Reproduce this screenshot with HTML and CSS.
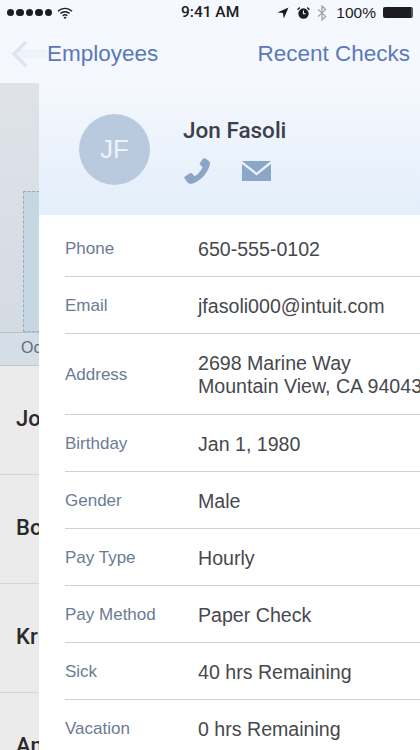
FILE: index.html
```html
<!DOCTYPE html>
<html lang="en">
<head>
    <meta charset="UTF-8">
    <meta name="viewport" content="width=device-width, initial-scale=1.0">
    <title>Jon Fasoli</title>
    <link rel="stylesheet" href="styles.css">
</head>
<body>
    <div class="screen">
        <div class="top">
            <div class="status">
                <div class="status-left">
                    <span class="dots"><i></i><i></i><i></i><i></i><i></i></span>
                    <svg class="wifi" width="16" height="12" viewBox="0 0 16 12">
                        <path d="M1 4.200a10 10 0 0 1 14 0M3.400 6.600a6.600 6.600 0 0 1 9.200 0M5.700 8.800a3.300 3.300 0 0 1 4.600 0" fill="none" stroke="#1c1c22" stroke-width="1.400"/>
                        <path d="M8 12l-1.500-1.600a2.100 2.100 0 0 1 3 0z" fill="#1c1c22"/>
                    </svg>
                </div>
                <div class="time">9:41 AM</div>
                <div class="status-right">
                    <svg width="12" height="12" viewBox="0 0 12 12"><path d="M11.500 .5L.5 5.400l5.400.7.900 5.400z" fill="#1c1c22"/></svg>
                    <svg class="alarm" width="13" height="14" viewBox="0 0 14 14">
                        <circle cx="7" cy="7.600" r="5.600" fill="#1c1c22"/>
                        <path d="M7 4.400v3.400h2.400" fill="none" stroke="#f4f7fd" stroke-width="1.100"/>
                        <path d="M.6 3.400L3 1M13.400 3.400L11 1" stroke="#1c1c22" stroke-width="1.500"/>
                    </svg>
                    <svg class="bt" width="10" height="16" viewBox="0 0 10 16"><path d="M1 4.400l7.600 7L5 15V1l3.600 3.600L1 11.600" fill="none" stroke="#9a9ca3" stroke-width="1.200"/></svg>
                    <span class="pct">100%</span>
                    <span class="battery"></span>
                </div>
            </div>
            <div class="nav">
                <div class="nav-back">
                    <svg width="36" height="30" viewBox="0 0 36 30"><path d="M6 15h30" stroke="#eef2f9" stroke-width="9"/><path d="M15 3L3 15l12 12" fill="none" stroke="#dfe4ee" stroke-width="3.400"/></svg>
                    <span>Employees</span>
                </div>
                <span>Recent Checks</span>
            </div>
        </div>
        <div class="stage">
            <div class="behind">
                <div class="chart"><div class="bar"></div></div>
                <div class="month">Oct</div>
                <div class="person">Jon</div>
                <div class="person">Bob</div>
                <div class="person">Kris</div>
                <div class="person">Ann</div>
            </div>
            <div class="panel">
                <div class="head">
                    <div class="avatar">JF</div>
                    <div class="who">
                        <div class="name">Jon Fasoli</div>
                        <div class="actions">
                            <svg width="29" height="29" viewBox="0 0 29 29"><path d="M21 1.600l4.600 3.200c1.400 1 1.700 2.400 1.200 4.200-1.200 4.400-3.600 8.600-7 12-3.200 3.200-6.600 5.400-10.200 6.400-2.200.6-4 .4-5.200-1.200l-2.800-3.800c-.5-.8-.3-1.700.5-2.200l4.800-3c.8-.5 1.600-.4 2.200.3l1.700 2c.4.5 1 .6 1.600.3 3-1.900 5.300-4.500 6.900-7.700.3-.6.2-1.200-.3-1.600l-1.700-1.500c-.7-.6-.8-1.400-.4-2.100l2.900-4c.4-.7 1.300-.8 2.200-.3z" fill="#8ba6c6"/></svg>
                            <svg width="29" height="20" viewBox="0 0 29 20"><path d="M0 0h29L14.500 11.500z" fill="#8ba6c6"/><path d="M0 3v17h29V3L14.500 14.500z" fill="#8ba6c6"/></svg>
                        </div>
                    </div>
                </div>
                <div class="rows">
                    <div class="row first"><div class="label">Phone</div><div class="value">650-555-0102</div></div>
                    <div class="row"><div class="label">Email</div><div class="value">jfasoli000@intuit.com</div></div>
                    <div class="row tall"><div class="label">Address</div><div class="value">2698 Marine Way<br>Mountain View, CA 94043</div></div>
                    <div class="row"><div class="label">Birthday</div><div class="value">Jan 1, 1980</div></div>
                    <div class="row"><div class="label">Gender</div><div class="value">Male</div></div>
                    <div class="row"><div class="label">Pay Type</div><div class="value">Hourly</div></div>
                    <div class="row"><div class="label">Pay Method</div><div class="value">Paper Check</div></div>
                    <div class="row"><div class="label">Sick</div><div class="value">40 hrs Remaining</div></div>
                    <div class="row"><div class="label">Vacation</div><div class="value">0 hrs Remaining</div></div>
                </div>
            </div>
        </div>
    </div>
</body>
</html>
```

FILE: styles.css
```css
html, body {
    margin: 0;
    padding: 0;
}

body {
    font-family: "Liberation Sans", Arial, sans-serif;
    background: #fff;
}

.screen {
    width: 420px;
    height: 750px;
    overflow: hidden;
    display: flex;
    flex-direction: column;
}

.top {
    height: 83px;
    flex: none;
    background: #f5f8fe;
}

.status {
    height: 25px;
    display: flex;
    align-items: center;
    justify-content: space-between;
    padding: 0 7px;
    color: #1c1c22;
    position: relative;
}

.status-left, .status-right {
    display: flex;
    align-items: center;
}

.status-left {
    gap: 5px;
}

.dots {
    display: flex;
    gap: 2px;
}

.dots i {
    width: 7.400px;
    height: 7.400px;
    border-radius: 50%;
    background: #1c1c22;
}

.time {
    font-family: Roboto, sans-serif;
    font-size: 15.500px;
    font-weight: 500;
    position: absolute;
    left: 181px;
    top: 3px;
}

.status-right {
    font-size: 15.500px;
}

.status-right .alarm {
    margin-left: 8px;
}

.status-right .bt {
    margin-left: 7px;
}

.pct {
    margin-left: 9px;
}

.battery {
    width: 28px;
    height: 11px;
    margin-left: 7px;
    background: #1c1c22;
    border-radius: 2px;
    border-right: 2px solid #55555b;
    box-sizing: content-box;
}

.nav {
    display: flex;
    justify-content: space-between;
    align-items: center;
    height: 58px;
    padding: 0 10px 0 11px;
    font-size: 22.500px;
    color: #5b78b8;
}

.nav-back {
    display: flex;
    align-items: center;
}

.stage {
    flex: 1;
    display: flex;
    min-height: 0;
}

.behind {
    width: 39px;
    flex: none;
    overflow: hidden;
    background: #ebebeb;
    white-space: nowrap;
}

.chart {
    height: 249px;
    box-sizing: border-box;
    padding: 108px 0 0 23px;
    background: linear-gradient(#dfe2e9, #d5dbe3);
}

.bar {
    height: 141px;
    margin-right: -10px;
    background: #c4d7e2;
    border: 1px dashed #8eb0c0;
    box-sizing: border-box;
}

.month {
    height: 34px;
    line-height: 30px;
    padding-left: 21px;
    font-size: 16px;
    color: #5f6b7d;
    background: #d5dee7;
    border-top: 1px solid #b9c2cc;
    border-bottom: 1px solid #c4c8cc;
    box-sizing: border-box;
}

.person {
    height: 109px;
    box-sizing: border-box;
    padding: 0 0 3px 16px;
    display: flex;
    align-items: center;
    font-family: Roboto, sans-serif;
    font-size: 22px;
    font-weight: 500;
    color: #2a2a2c;
    border-bottom: 1px solid #d5d5d5;
}

.panel {
    flex: 1;
    min-width: 0;
    background: #fff;
}

.head {
    height: 132px;
    box-sizing: border-box;
    padding: 31px 0 0 40px;
    display: flex;
    gap: 33px;
    background: linear-gradient(#f5f8fe, #e3eefa);
}

.avatar {
    width: 71px;
    height: 71px;
    border-radius: 50%;
    background: #b9cade;
    color: #edf3f9;
    font-size: 26px;
    display: flex;
    align-items: center;
    justify-content: center;
}

.name {
    font-family: Roboto, sans-serif;
    font-size: 22.500px;
    font-weight: 500;
    color: #3b404b;
    margin-top: 3px;
}

.actions {
    display: flex;
    align-items: center;
    gap: 30px;
    margin-top: 13px;
}

.rows {
    padding-left: 26px;
}

.row {
    height: 57px;
    box-sizing: border-box;
    padding-top: 2px;
    display: flex;
    align-items: center;
    border-bottom: 1px solid #d0d0d2;
    white-space: nowrap;
}

.row.first {
    height: 62px;
    padding-top: 7px;
}

.row.tall {
    height: 81px;
}

.label {
    width: 133px;
    flex: none;
    font-size: 17px;
    color: #6b7b94;
}

.value {
    font-size: 19.600px;
    line-height: 23px;
    color: #46484e;
}
```
